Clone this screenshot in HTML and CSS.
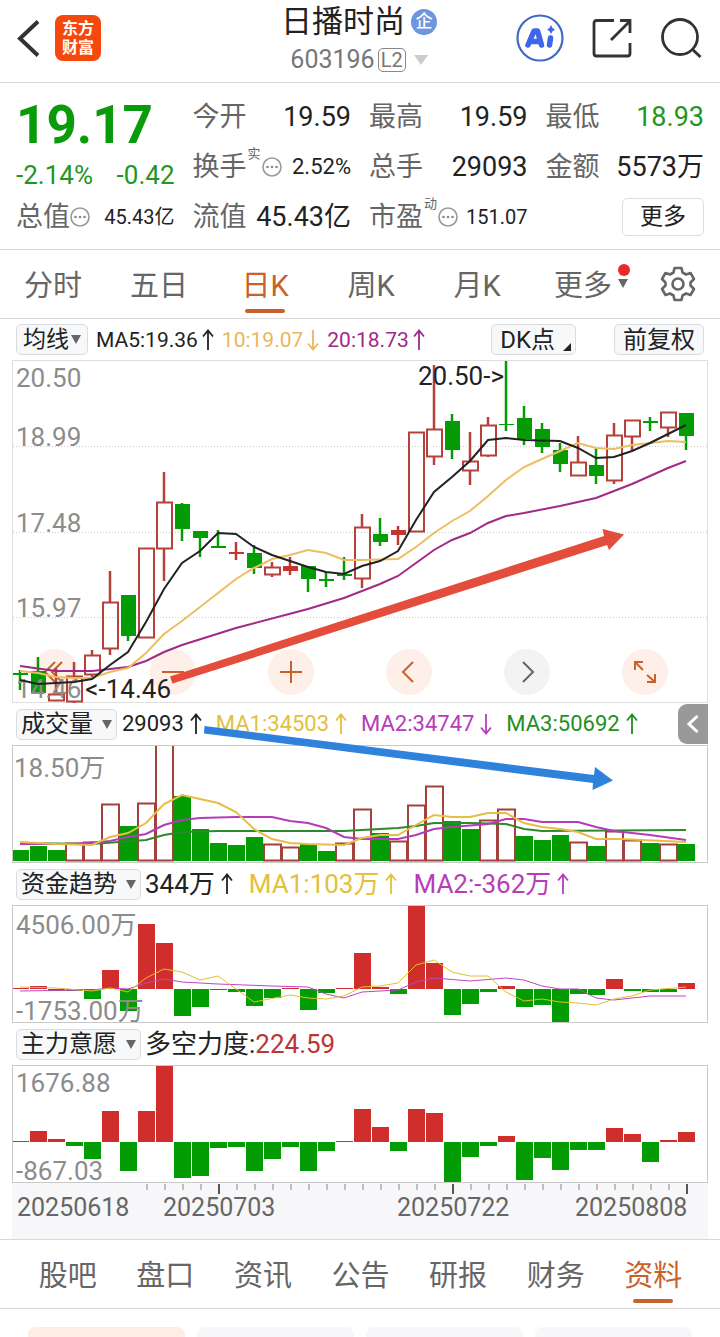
FILE: index.html
```html
<!DOCTYPE html>
<html lang="zh-CN">
<head>
<meta charset="utf-8">
<meta name="viewport" content="width=device-width, initial-scale=1">
<title>日播时尚 603196</title>
<link rel="stylesheet" href="styles.css">
</head>
<body>
<svg class="defs" aria-hidden="true">
  <symbol id="up" viewBox="0 0 12 22"><path d="M6 21V2M1 7.500L6 1.500L11 7.500" fill="none" stroke="currentColor" stroke-width="1.800"/></symbol>
  <symbol id="down" viewBox="0 0 12 22"><path d="M6 1V20M1 14.500L6 20.500L11 14.500" fill="none" stroke="currentColor" stroke-width="1.800"/></symbol>
  <symbol id="info" viewBox="0 0 20 20"><circle cx="10" cy="10" r="9" fill="none" stroke="#999" stroke-width="1.600"/><g fill="#888"><circle cx="5.500" cy="10" r="1.300"/><circle cx="10" cy="10" r="1.300"/><circle cx="14.500" cy="10" r="1.300"/></g></symbol>
</svg>

<header class="topbar">
  <div class="side">
    <button class="icon-btn" aria-label="返回"><svg width="24" height="38" viewBox="0 0 24 38"><path d="M22 2.500L4 19.500L22 36.500" fill="none" stroke="#333" stroke-width="4"/></svg></button>
    <a class="brand" href="#"><span>东方</span><span>财富</span></a>
  </div>
  <div class="title">
    <h1>日播时尚<span class="badge">企</span></h1>
    <button class="code">603196<span class="level">L2</span><i class="tri tri-pale"></i></button>
  </div>
  <div class="side side-end">
    <button class="icon-btn" aria-label="Ai"><svg width="48" height="48" viewBox="0 0 48 48"><circle cx="24" cy="24" r="22.500" fill="none" stroke="#3f69c6" stroke-width="2.200"/><path d="M12 31L18 17H21.500L25.500 31M14 27.500H24" fill="none" stroke="#3d66e8" stroke-width="5.500" stroke-linejoin="round" stroke-linecap="round"/><path d="M34.500 24L33.500 31" stroke="#3d66e8" stroke-width="5.500" stroke-linecap="round"/><path d="M35 11Q36 14.500 39 15.500Q36 16.500 35 20Q34 16.500 31 15.500Q34 14.500 35 11Z" fill="#3d66e8"/></svg></button>
    <button class="icon-btn" aria-label="分享"><svg width="40" height="40" viewBox="0 0 40 40"><path d="M22 2.500H4.500Q2 2.500 2 5V35.500Q2 38 4.500 38H35.500Q38 38 38 35.500V25M28 2.500H38V15M19 22L37 4" fill="none" stroke="#333" stroke-width="2.800"/></svg></button>
    <button class="icon-btn" aria-label="搜索"><svg width="42" height="42" viewBox="0 0 42 42"><circle cx="20" cy="20" r="17.500" fill="none" stroke="#333" stroke-width="2.800"/><path d="M32 32L40.500 40" stroke="#333" stroke-width="3"/></svg></button>
  </div>
</header>

<main>
<section class="quote">
  <div class="col">
    <div class="price">19.17</div>
    <div class="change"><span>-2.14%</span><span>-0.42</span></div>
    <div class="cell"><span class="name">总值</span><svg class="info"><use href="#info"/></svg><span class="val small">45.43亿</span></div>
  </div>
  <div class="col">
    <div class="cell"><span class="name">今开</span><span class="val">19.59</span></div>
    <div class="cell"><span class="name">换手</span><sup>实</sup><svg class="info"><use href="#info"/></svg><span class="val mid">2.52%</span></div>
    <div class="cell"><span class="name">流值</span><span class="val">45.43亿</span></div>
  </div>
  <div class="col">
    <div class="cell"><span class="name">最高</span><span class="val">19.59</span></div>
    <div class="cell"><span class="name">总手</span><span class="val">29093</span></div>
    <div class="cell"><span class="name">市盈</span><sup>动</sup><svg class="info"><use href="#info"/></svg><span class="val small">151.07</span></div>
  </div>
  <div class="col">
    <div class="cell"><span class="name">最低</span><span class="val green">18.93</span></div>
    <div class="cell"><span class="name">金额</span><span class="val">5573万</span></div>
    <div class="cell"><button class="more">更多</button></div>
  </div>
</section>

<nav class="periods">
  <button>分时</button><button>五日</button><button class="on">日K</button><button>周K</button><button>月K</button>
  <button><span class="has-dot">更多<i class="tri"></i></span></button>
  <button class="gear" aria-label="设置"><svg width="36" height="36" viewBox="0 0 36 36"><path d="M14.500 2H21.500L22.500 6.500L26 8.500L30.500 7L34 13L30.500 16.500V19.500L34 23L30.500 29L26 27.500L22.500 29.500L21.500 34H14.500L13.500 29.500L10 27.500L5.500 29L2 23L5.500 19.500V16.500L2 13L5.500 7L10 8.500L13.500 6.500Z" fill="none" stroke="#666" stroke-width="2.600" stroke-linejoin="round"/><circle cx="18" cy="18" r="5.500" fill="none" stroke="#666" stroke-width="2.600"/></svg></button>
</nav>

<section class="charts">
  <div class="bar bar-ma">
    <button class="chip chip-tight">均线<i class="tri"></i></button>
    <span class="ma">MA5:19.36<svg class="arr"><use href="#up"/></svg></span>
    <span class="ma gold">10:19.07<svg class="arr"><use href="#down"/></svg></span>
    <span class="ma plum">20:18.73<svg class="arr"><use href="#up"/></svg></span>
    <span class="chips"><button class="chip dk">DK点<i class="corner"></i></button><button class="chip">前复权</button></span>
  </div>
  <div class="plot">
    <div class="tools">
      <button aria-label="最左"><svg viewBox="0 0 46 46"><path d="M23 13L13 23L23 33M30 13L20 23L30 33"/></svg></button>
      <button aria-label="缩小"><svg viewBox="0 0 46 46"><path d="M12 23H34"/></svg></button>
      <button aria-label="放大"><svg viewBox="0 0 46 46"><path d="M12 23H34M23 12V34"/></svg></button>
      <button aria-label="左移"><svg viewBox="0 0 46 46"><path d="M27 13L17 23L27 33"/></svg></button>
      <button class="off" aria-label="右移"><svg viewBox="0 0 46 46"><path d="M19 13L29 23L19 33"/></svg></button>
      <button aria-label="全屏"><svg viewBox="0 0 46 46"><path d="M13 21V13H21M13 13L21 21M25 26L33 33M33 25V33H25"/></svg></button>
    </div>
    <svg id="kline" class="canvas" viewBox="12 360 696 343"></svg>
  </div>

  <div class="volume">
    <div class="bar bar-vol">
      <button class="chip">成交量<i class="tri"></i></button>
      <span>29093<svg class="arr"><use href="#up"/></svg></span>
      <span class="yellow">MA1:34503<svg class="arr"><use href="#up"/></svg></span>
      <span class="violet">MA2:34747<svg class="arr"><use href="#down"/></svg></span>
      <span class="dgreen">MA3:50692<svg class="arr"><use href="#up"/></svg></span>
      <button class="fold" aria-label="展开"><svg width="12" height="20" viewBox="0 0 12 20"><path d="M10.500 2L2 10L10.500 18" fill="none" stroke="#fff" stroke-width="3"/></svg></button>
    </div>
    <svg id="vol" class="canvas" viewBox="12 745 696 118"></svg>
    <svg class="trend" viewBox="12 703 696 160"><path d="M204.500 726L594 775L595 767L613 780.500L592.500 790L593 783L204 733.500Z" fill="#2f82dc"/></svg>
  </div>

  <div class="bar bar-fund">
    <button class="chip">资金趋势<i class="tri"></i></button>
    <span>344万<svg class="arr"><use href="#up"/></svg></span>
    <span class="yellow">MA1:103万<svg class="arr"><use href="#up"/></svg></span>
    <span class="violet">MA2:-362万<svg class="arr"><use href="#up"/></svg></span>
  </div>
  <svg id="fund" class="canvas" viewBox="12 905 696 118"></svg>

  <div class="bar bar-fund">
    <button class="chip">主力意愿<i class="tri"></i></button>
    <span>多空力度:<b class="crimson">224.59</b></span>
  </div>
  <svg id="force" class="canvas" viewBox="12 1065 696 118"></svg>
  <svg id="axis" class="canvas axis" viewBox="12 1183 696 56"></svg>
</section>

<nav class="sections">
  <button>股吧</button><button>盘口</button><button>资讯</button><button>公告</button><button>研报</button><button>财务</button><button class="on">资料</button>
</nav>
<div class="cards"><div class="card card-on"></div><div class="card"></div><div class="card"></div><div class="card"></div></div>
</main>
<script src="charts.js"></script>
</body>
</html>
```

FILE: styles.css
```css
* { box-sizing: border-box; }
body {
  margin: 0;
  background: #fff;
  color: #222;
  font-family: Roboto, "Noto Sans CJK SC", sans-serif;
  line-height: 32px;
}
button {
  font: inherit;
  color: inherit;
  background: none;
  border: 0;
  padding: 0;
  margin: 0;
}
svg { display: block; }
.defs { position: absolute; width: 0; height: 0; }

.tri {
  display: inline-block;
  border: 5px solid transparent;
  border-top: 9px solid #666;
  border-bottom: 0;
}
.tri-pale { border-width: 10px 7px 0; border-top-color: #ccc; margin-left: 8px; }

/* top bar */
.topbar {
  display: grid;
  grid-template-columns: 1fr auto 1fr;
  align-items: center;
  height: 83px;
  padding: 0 18px 2px 16px;
  border-bottom: 1px solid #d8d8d8;
}
.side { display: flex; align-items: center; gap: 15px; padding-bottom: 4px; }
.side-end { justify-content: flex-end; gap: 28px; }
.brand {
  display: flex;
  flex-direction: column;
  align-items: center;
  justify-content: center;
  width: 46px;
  height: 46px;
  border-radius: 8px;
  background: #f5480c;
  color: #fff;
  font-size: 16px;
  font-weight: 700;
  line-height: 19px;
  text-decoration: none;
}
.title { display: flex; flex-direction: column; align-items: center; }
.title h1 {
  display: flex;
  align-items: center;
  gap: 6px;
  margin: 0;
  font-size: 31px;
  font-weight: 400;
  line-height: 40px;
}
.badge {
  width: 26px;
  height: 26px;
  border-radius: 50%;
  background: #6d96df;
  color: #fff;
  font-size: 17px;
  font-weight: 500;
  line-height: 25px;
  text-align: center;
}
.code {
  display: flex;
  align-items: center;
  font-size: 25px;
  line-height: 36px;
  color: #777;
}
.level {
  margin-left: 3px;
  padding: 0 2px;
  border: 1px solid #888;
  border-radius: 5px;
  font-size: 20px;
  line-height: 22px;
}

/* quote */
.quote {
  display: grid;
  grid-template-columns: repeat(4, 1fr);
  gap: 18px;
  height: 167px;
  padding: 9px 16px 0;
  border-bottom: 1px solid #d8d8d8;
}
.price {
  color: #0a9b0a;
  font-size: 53px;
  font-weight: 700;
  line-height: 66px;
}
.change {
  display: flex;
  justify-content: space-between;
  color: #1f961f;
  font-size: 26px;
  line-height: 34px;
}
.cell { display: flex; align-items: center; height: 50px; white-space: nowrap; }
.name { color: #666; font-size: 27px; }
.val { margin-left: auto; font-size: 27px; }
.val.small { font-size: 20px; }
.val.mid { font-size: 22px; }
.val.green { color: #1f961f; }
.info { width: 20px; height: 20px; flex: none; }
.cell sup {
  align-self: flex-start;
  margin: 2px 1px 0;
  color: #666;
  font-size: 13px;
  line-height: 20px;
}
.more {
  margin-left: auto;
  width: 82px;
  height: 38px;
  border: 1px solid #ddd;
  border-radius: 5px;
  font-size: 23px;
}

/* period tabs */
.periods {
  display: grid;
  grid-template-columns: repeat(6, 106fr) 84fr;
  height: 69px;
  border-bottom: 1px solid #d8d8d8;
  color: #666;
  font-size: 29px;
}
.periods button, .sections button {
  position: relative;
  display: flex;
  align-items: center;
  justify-content: center;
  padding-top: 4px;
}
.periods .gear { padding-top: 0; }
.on { color: #c8622a; }
.on::after {
  content: "";
  position: absolute;
  bottom: 5px;
  left: 50%;
  width: 40px;
  height: 4px;
  margin-left: -20px;
  border-radius: 2px;
  background: #c8622a;
}
.has-dot { position: relative; }
.has-dot .tri { position: absolute; left: 100%; top: 50%; margin-left: 6px; margin-top: -7px; }
.has-dot::after {
  content: "";
  position: absolute;
  left: 100%;
  top: -6px;
  width: 12px;
  height: 12px;
  margin-left: 6px;
  border-radius: 50%;
  background: #e92a2a;
}

/* indicators */
.charts { padding: 0 12px; }
.bar {
  display: flex;
  align-items: center;
  height: 42px;
  padding-left: 4px;
  white-space: nowrap;
}
.bar > span { display: inline-flex; align-items: center; }
.bar-ma { height: 41px; font-size: 21px; gap: 8px; padding-right: 4px; }
.bar-vol { font-size: 22px; gap: 14px; }
.bar-vol .chip { margin-right: -9px; }
.bar-fund { font-size: 26px; gap: 16px; }
.bar-fund .chip { margin-right: -12px; }
.bar b { font-weight: 400; }
.arr { width: 12px; height: 22px; margin-left: 6px; }
.ma .arr { margin-left: 4px; }
.chip {
  display: flex;
  align-items: center;
  gap: 9px;
  height: 31px;
  padding: 0 4px;
  border: 1px solid #dcdce0;
  border-radius: 5px;
  background: #f7f8fa;
  color: #222;
  font-size: 24px;
  line-height: 28px;
}
.chip-tight { gap: 2px; padding: 0 6px; font-size: 23px; }
.chips { margin-left: auto; gap: 38px; }
.chips .chip { padding: 0 8px; }
.chips .dk { padding-right: 4px; gap: 8px; }
.corner {
  align-self: flex-end;
  margin-bottom: 3px;
  border-left: 8px solid transparent;
  border-bottom: 8px solid #222;
}
.gold { color: #e8b85a; }
.plum { color: #a02a86; }
.yellow { color: #e3bf3c; }
.violet { color: #b63cb9; }
.dgreen { color: #1f901f; }
.crimson { color: #bd3434; }

.plot, .volume { position: relative; }
.canvas {
  position: relative;
  width: 100%;
  height: auto;
  overflow: visible;
  font-family: Roboto, "Noto Sans CJK SC", sans-serif;
  pointer-events: none;
}
#vol { overflow: hidden; }
.tools {
  position: absolute;
  left: 20px;
  right: 40px;
  bottom: 8px;
  display: flex;
  justify-content: space-between;
}
.tools button { width: 46px; height: 46px; border-radius: 50%; background: #feefe8; color: #c8622a; }
.tools .off { background: #f3f3f3; color: #666; }
.tools path { fill: none; stroke: currentColor; stroke-width: 2; }
.fold {
  align-self: stretch;
  display: flex;
  align-items: center;
  justify-content: center;
  width: 30px;
  margin: 1px 0 1px auto;
  border-radius: 9px 0 0 9px;
  background: #999;
}
.trend { position: absolute; inset: 0; width: 100%; height: 100%; pointer-events: none; }
.axis { background: #f7f7fa; }

.scale { fill: #8c8c8c; font-size: 26px; }
.mark { fill: #222; font-size: 26px; text-anchor: end; }
.date { fill: #666; font-size: 25px; }
.line { fill: none; stroke-width: 2; }
.thin { stroke-width: 1; }

/* bottom tabs */
.sections {
  display: grid;
  grid-template-columns: repeat(7, 1fr);
  height: 70px;
  padding: 0 18px 0 19px;
  border-top: 1px solid #d8d8d8;
  border-bottom: 1px solid #d8d8d8;
  color: #666;
  font-size: 29px;
}
.cards {
  display: grid;
  grid-template-columns: repeat(4, 1fr);
  gap: 12px;
  padding: 18px 28px 0;
}
.card { height: 10px; border-radius: 8px 8px 0 0; background: #f7f7fa; }
.card-on { background: #feede5; }
```

FILE: charts.js
```js
const RED = '#b5413b', GREEN = '#049c04', FILL = '#cf2e2c';
const x = i => 20 + 18 * i;
const rect = (l, t, w, h, extra) => `<rect x="${l}" y="${t}" width="${w}" height="${h}" ${extra}/>`;
const seg = (x1, y1, x2, y2, c, w = 2) => `<path d="M${x1} ${y1}L${x2} ${y2}" stroke="${c}" stroke-width="${w}"/>`;
const line = (pts, c, cls = '') => `<polyline class="line ${cls}" points="${pts}" stroke="${c}"/>`;
const text = (tx, ty, s, cls = 'scale') => `<text class="${cls}" x="${tx}" y="${ty}">${s}</text>`;
const frame = (top, h, c = '#c9c9c9') => rect(12.5, top + 0.5, 695, h - 1, `fill="none" stroke="${c}"`);
const draw = (id, s) => { document.getElementById(id).innerHTML = s; };

/* [kind, high, body top, body bottom, low]; r = hollow red, R = solid red, g = solid green */
const candles = [
  ['g',670,673,675,690],['g',657,671,693,693],['r',668,694,700,700],['r',662,676,701,703],['r',650,655,674,677],
  ['r',571,602,648,655],['g',595,595,636,641],['r',548,548,637,637],['r',472,502,548,581],['g',503,504,529,541],
  ['g',531,531,538,557],['g',530,546,548,548],['R',542,552,554,560],['g',545,553,568,574],['r',562,567,574,577],
  ['R',557,566,571,575],['g',566,566,579,592],['g',572,579,581,587],['g',557,574,576,580],['r',514,527,578,588],
  ['g',518,534,542,546],['R',526,530,535,545],['r',432,432,531,531],['r',365,429,456,465],['g',414,421,450,459],
  ['r',432,461,470,485],['r',417,425,455,457],['g',361,424,425,431],['g',406,418,439,445],['g',423,429,447,453],
  ['g',443,450,464,472],['r',436,462,475,475],['g',448,465,476,484],['r',423,435,480,484],['r',420,420,436,450],
  ['g',417,421,423,431],['r',412,412,427,437],['g',413,413,436,450]
];
let k = frame(360, 343, '#dedede');
for (const y of [446, 532, 617]) k += `<path d="M13 ${y}.5H707" stroke="#ccc" stroke-dasharray="1 2"/>`;
k += text(16, 387, '20.50') + text(16, 446, '18.99') + text(16, 532, '17.48') + text(16, 617, '15.97');
candles.forEach(([t, hi, a, b, lo], i) => {
  const c = t === 'g' ? GREEN : t === 'R' ? '#c43433' : RED;
  k += seg(x(i), hi, x(i), a, c, 2.5) + seg(x(i), b, x(i), lo, c, 2.5);
  k += t === 'r' ? rect(x(i) - 7, a + 0.5, 15, b - a, `fill="none" stroke="${c}" stroke-width="2"`)
                 : rect(x(i) - 7, a, 15, b - a, `fill="${c}"`);
});
k += text(16, 698, '14.46') + text(171, 698, '&lt;-14.46', 'mark') + text(504, 385, '20.50-&gt;', 'mark');
k += line('20,666 56,671 92,671 128,667 146,661 164,652 182,645 236,628 308,609 344,598 362,591 380,584 398,576 416,563 434,550 452,540 470,533 488,523 506,516 524,513 560,506 596,498 614,491 632,484 650,476 668,468 686,461', '#a02a86');
k += line('20,671 38,673 56,677 74,678 92,678 110,672 128,668 146,653 164,634 182,621 200,607 218,593 236,579 254,568 272,559 290,555 308,550 326,553 344,560 362,560 398,559 416,547 434,533 452,521 470,511 488,496 506,480 524,467 542,459 560,451 578,443 596,448 614,449 632,445 650,443 668,441 686,442', '#ecbe62');
k += line('20,680 38,684 56,683 74,682 92,679 110,665 128,652 146,622 164,589 182,563 200,551 218,533 236,534 254,547 272,555 290,561 308,567 326,572 344,574 362,566 380,561 398,551 416,520 434,492 452,477 470,461 488,440 506,438 524,440 560,441 578,448 596,458 614,457 632,451 650,443 668,434 686,425', '#222');
k += '<path d="M170 676.500L604 536L602.500 529L624 534.500L609 550L607 545L172.500 683.500Z" fill="#e44c3c"/>';
draw('kline', k);

const vol = 'g850 g846 g850 r843 r842 r804 g826 r803 r720 g796 g829 g843 g845 g837 r844 r847 g844 g851 r843 r809 g833 r841 r805 r786 g821 g829 r820 r809 g836 g840 g835 r842 g846 r831 r840 g843 r844 g844'.split(' ');
let v = text(14, 777, '18.50万');
vol.forEach((d, i) => {
  const y = +d.slice(1), l = 12 + 18 * i;
  v += d[0] === 'g' ? rect(l, y, 17, 861 - y, `fill="${GREEN}"`)
                    : rect(l, y + 0.5, 17, 860 - y, 'fill="#fff" stroke="#a3423d" stroke-width="2"');
});
v += line('20,843 92,844 146,840 164,835 182,832 218,831 344,831 398,828 416,826 434,823 470,823 506,824 524,829 542,831 686,830', '#2c8a2c');
v += line('20,844 74,844 110,841 128,837 146,834 164,825 182,820 200,818 236,817 272,817 290,821 308,823 326,828 344,837 362,839 398,839 416,835 434,829 452,827 488,824 506,819 524,819 542,822 578,822 596,827 614,831 650,835 686,840', '#b43cb8');
v += line('20,842 56,844 92,845 110,837 128,833 146,823 164,804 182,795 200,799 218,803 236,812 254,829 272,839 290,843 308,844 344,845 362,838 380,835 398,835 416,825 434,815 452,817 470,817 488,813 506,813 524,823 542,827 560,829 578,832 596,839 620,839 686,842', '#e6bd45');
draw('vol', v + frame(745, 118));

const bars = (ends, base) => ends.map((y, i) =>
  rect(12 + 18 * i, Math.min(y, base), 17, Math.abs(y - base), `fill="${y < base ? FILL : GREEN}"`)).join('');

let f = bars([988,986,991,991,999,970,1011,924,943,1016,1007,990,992,1006,998,988,1010,993,988,953,987,994,905,963,1015,1004,992,986,1007,1005,1022,994,995,979,991,992,992,983], 989);
f += line('20,991 92,990 110,988 128,989 146,983 164,979 182,982 218,984 272,986 308,987 326,994 344,998 362,992 398,990 416,982 434,978 470,981 506,978 524,980 542,986 560,989 578,989 596,998 614,1000 650,996 686,996', '#bf45c2', 'thin');
f += line('20,987 56,988 92,991 110,988 128,992 146,978 164,969 182,972 200,980 218,976 236,989 254,1002 290,995 308,998 326,999 344,996 362,987 380,986 398,983 416,965 434,960 452,972 470,976 488,976 506,992 524,1001 542,999 560,1002 578,1003 596,1005 614,999 632,996 650,990 686,987', '#e2c02c', 'thin');
draw('fund', f + text(16, 934, '4506.00万') + text(16, 1020, '-1753.00万') + frame(905, 118));

draw('force', bars([1141,1131,1139,1146,1159,1111,1171,1111,1066,1178,1176,1148,1147,1171,1159,1147,1171,1151,1141,1109,1127,1151,1109,1113,1182,1157,1146,1136,1180,1158,1170,1150,1150,1128,1134,1162,1140,1132], 1142)
  + text(16, 1092, '1676.88') + text(16, 1180, '-867.03') + frame(1065, 118));

let a = '';
for (let i = 7; i < 38; i++) {
  const major = [11, 24, 37].includes(i);
  a += seg(21 + 18 * i, 1184, 21 + 18 * i, major ? 1194 : 1190, major ? '#555' : '#aaa', major ? 2 : 1.5);
}
[[17, '20250618'], [163, '20250703'], [397, '20250722'], [575, '20250808']].forEach(([tx, s]) => { a += text(tx, 1216, s, 'date'); });
draw('axis', a);
```
